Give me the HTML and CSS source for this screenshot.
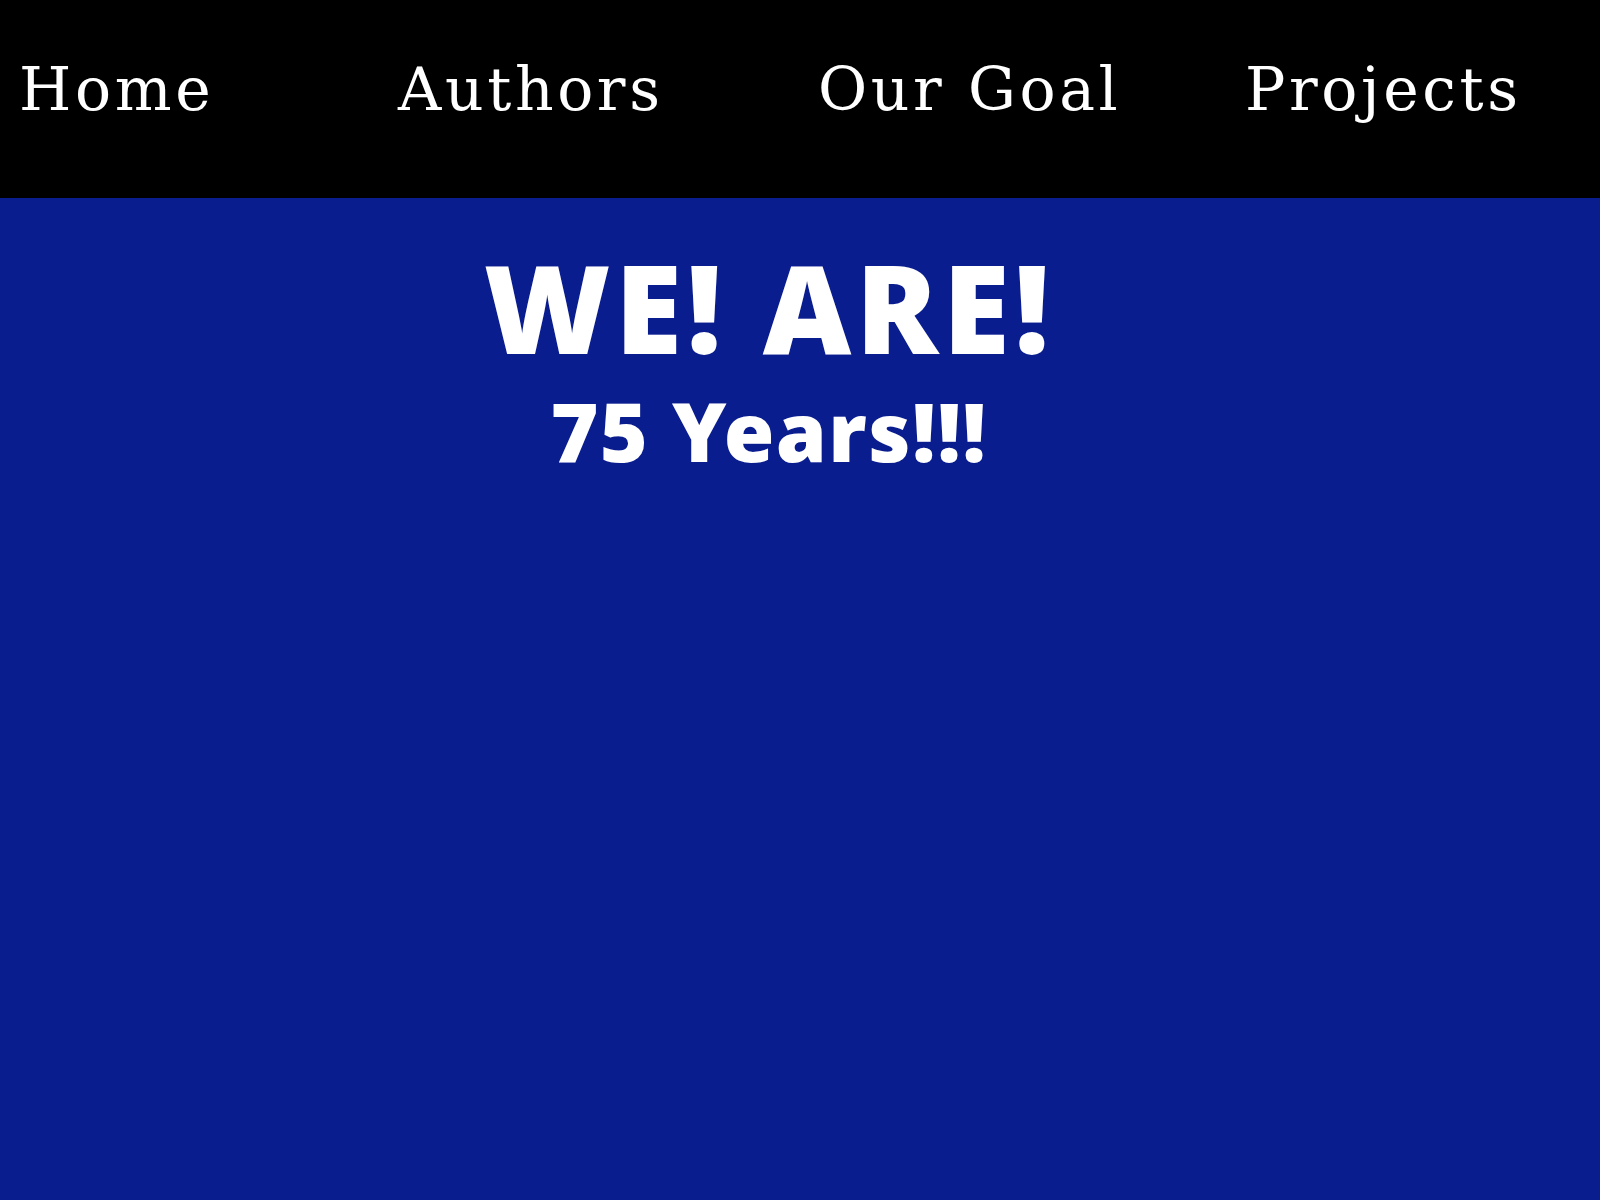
FILE: index.html
```html
<!DOCTYPE html>
<html lang="en">
<head>
<meta charset="utf-8">
<title>WE! ARE!</title>
<link rel="stylesheet" href="styles.css">
</head>
<body>
<nav class="topnav">
  <a class="navlink" href="#">Home</a>
  <a class="navlink" href="#">Authors</a>
  <a class="navlink" href="#">Our Goal</a>
  <a class="navlink" href="#">Projects</a>
</nav>
<main class="hero">
  <h1 class="hero-title">WE! ARE!</h1>
  <h2 class="hero-sub">75 Years!!!</h2>
</main>
</body>
</html>
```
FILE: styles.css
```css
html, body {
  margin: 0;
  padding: 0;
  background: #0a1d8f;
}
body {
  min-height: 1200px;
}
.topnav {
  background: #000;
  height: 198px;
  box-sizing: border-box;
  padding: 54px 0 0 19px;
  display: grid;
  grid-template-columns: 379px 420px 427px auto;
  align-items: start;
}
.navlink {
  font-family: "DejaVu Serif", serif;
  font-size: 60px;
  letter-spacing: 3.6px;
  line-height: normal;
  color: #fff;
  text-decoration: none;
  justify-self: start;
}
.hero {
  padding-right: 62px;
  text-align: center;
  color: #fff;
}
.hero-title,
.hero-sub {
  font-family: "Noto Sans", "Open Sans", sans-serif;
  font-weight: 900;
  line-height: 1;
}
.hero-title {
  margin: 48px 0 0;
  font-size: 122px;
  letter-spacing: 4.5px;
}
.hero-sub {
  margin: 21px 0 0;
  font-size: 82px;
  letter-spacing: 1.4px;
}
```
